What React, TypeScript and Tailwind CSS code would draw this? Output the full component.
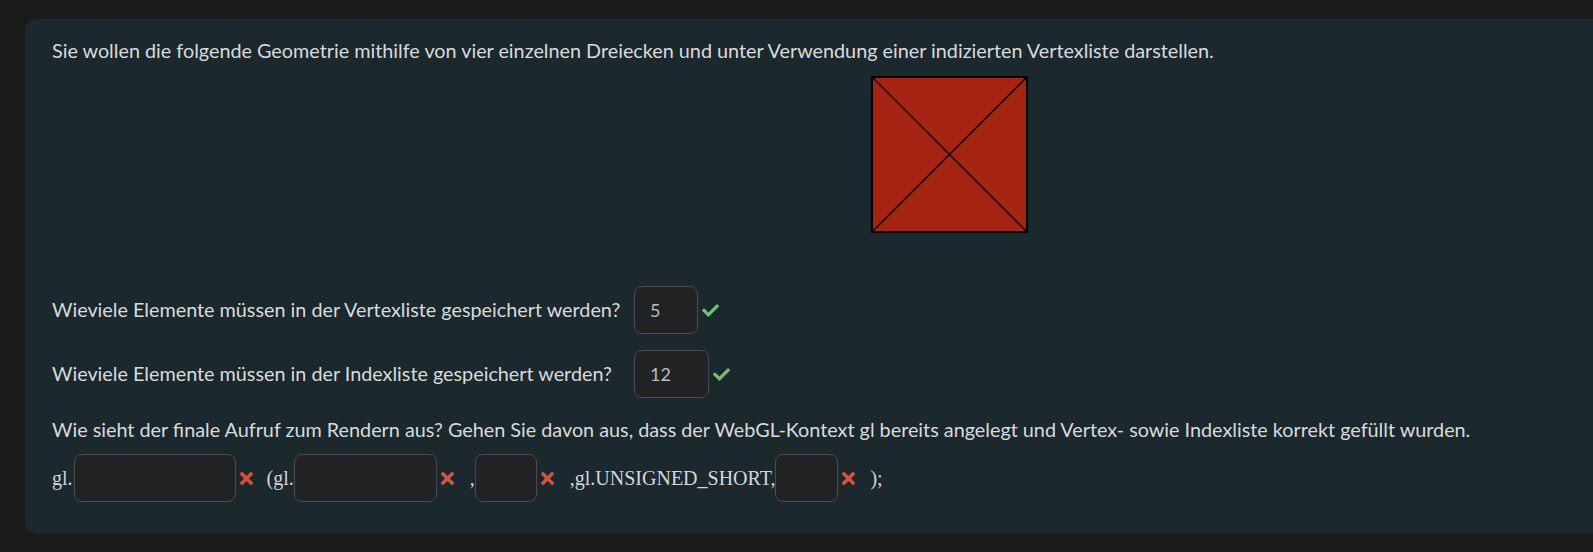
import React from 'react';
import { FaCheck, FaTimes } from 'react-icons/fa';

const sans = { fontFamily: 'Lato, "Open Sans", sans-serif' };

const Answer: React.FC<{ value?: string; width: string }> = ({ value, width }) => (
    <div
        className={`h-[48px] ${width} rounded-[8px] border border-[#4b4c4f] bg-[#212224] flex items-center pl-[15px] text-[18px] text-[#bdbdbd]`}
        style={sans}
    >
        {value}
    </div>
);

const Ok = () => <FaCheck className="ml-[4px] text-[#74bd72] w-[17px] h-[17px]" />;
const Wrong = () => <FaTimes className="ml-[1px] text-[#d4533d] w-[19px] h-[19px]" />;

export default function App() {
    return (
        <div className="min-h-screen w-full overflow-hidden bg-[#191a1a] pt-[19px] pb-[18px] pl-[25px]">
            <div
                className="w-[1849px] rounded-[10px] bg-[#1b282d] pl-[27px] pr-[27px] pt-[17px] pb-[32px] text-[#d9dadb]"
                style={sans}
            >
                <p className="text-[19.8px] leading-[28px]">
                    Sie wollen die folgende Geometrie mithilfe von vier einzelnen Dreiecken und unter Verwendung einer indizierten Vertexliste darstellen.
                </p>

                <div className="flex justify-center mt-[12px]">
                    <svg width="157" height="157" viewBox="0 0 157 157">
                        <rect x="1" y="1" width="155" height="155" fill="#a52313" stroke="#000" strokeWidth="2" />
                        <line x1="1" y1="1" x2="156" y2="156" stroke="#000" strokeWidth="1.3" />
                        <line x1="156" y1="1" x2="1" y2="156" stroke="#000" strokeWidth="1.3" />
                    </svg>
                </div>

                <div className="mt-[53px] flex items-center text-[19.8px]">
                    <span className="w-[582px]">Wieviele Elemente müssen in der Vertexliste gespeichert werden?</span>
                    <div className="flex items-center">
                        <Answer value="5" width="w-[64px]" />
                        <Ok />
                    </div>
                </div>

                <div className="mt-[16px] flex items-center text-[19.8px]">
                    <span className="w-[582px]">Wieviele Elemente müssen in der Indexliste gespeichert werden?</span>
                    <div className="flex items-center">
                        <Answer value="12" width="w-[75px]" />
                        <Ok />
                    </div>
                </div>

                <p className="mt-[17px] text-[19.8px] leading-[28px]">
                    Wie sieht der finale Aufruf zum Rendern aus? Gehen Sie davon aus, dass der WebGL-Kontext gl bereits angelegt und Vertex- sowie Indexliste korrekt gefüllt wurden.
                </p>

                <div
                    className="mt-[11px] flex items-center text-[20px] text-[#d6d6d6]"
                    style={{ fontFamily: '"Liberation Serif", "Times New Roman", serif' }}
                >
                    <span className="mr-[1px]">gl.</span>
                    <Answer width="w-[162px]" />
                    <Wrong />
                    <span className="ml-[11px]">(gl.</span>
                    <Answer width="w-[143px]" />
                    <Wrong />
                    <span className="ml-[13px]">,</span>
                    <Answer width="w-[62px]" />
                    <Wrong />
                    <span className="ml-[13px]">,gl.UNSIGNED_SHORT,</span>
                    <Answer width="w-[63px]" />
                    <Wrong />
                    <span className="ml-[12px]">);</span>
                </div>
            </div>
        </div>
    );
}
